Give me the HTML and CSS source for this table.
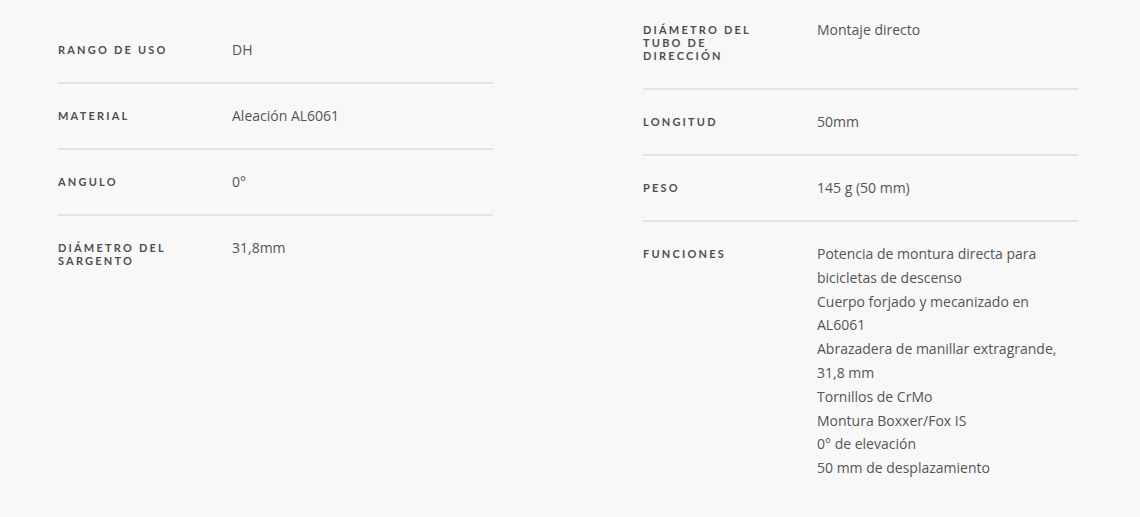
FILE: index.html
```html
<!DOCTYPE html>
<html lang="es">
<head>
<meta charset="utf-8">
<title>Especificaciones</title>
<link rel="stylesheet" href="styles.css">
</head>
<body>
<div class="specs">
  <div class="spec-table spec-left">
    <div class="row">
      <div class="label">Rango de uso</div>
      <div class="value">DH</div>
    </div>
    <div class="row">
      <div class="label">Material</div>
      <div class="value">Aleación AL6061</div>
    </div>
    <div class="row">
      <div class="label">Angulo</div>
      <div class="value">0°</div>
    </div>
    <div class="row last">
      <div class="label">Diámetro del sargento</div>
      <div class="value">31,8mm</div>
    </div>
  </div>
  <div class="spec-table spec-right">
    <div class="row">
      <div class="label">Diámetro del tubo de dirección</div>
      <div class="value">Montaje directo</div>
    </div>
    <div class="row">
      <div class="label">Longitud</div>
      <div class="value">50mm</div>
    </div>
    <div class="row">
      <div class="label">Peso</div>
      <div class="value">145 g (50 mm)</div>
    </div>
    <div class="row last">
      <div class="label">Funciones</div>
      <div class="value">Potencia de montura directa para bicicletas de descenso<br>Cuerpo forjado y mecanizado en AL6061<br>Abrazadera de manillar extragrande, 31,8 mm<br>Tornillos de CrMo<br>Montura Boxxer/Fox IS<br>0° de elevación<br>50 mm de desplazamiento</div>
    </div>
  </div>
</div>
</body>
</html>
```
FILE: styles.css
```css
html, body {
  margin: 0;
  padding: 0;
  background: #f8f8f8;
}
body {
  font-family: "Open Sans", "Liberation Sans", sans-serif;
  color: #555;
  height: 517px;
  overflow: hidden;
}
.specs {
  display: grid;
  grid-template-columns: 435px 435px;
  column-gap: 150px;
  padding-left: 58px;
  align-items: start;
}
.spec-left {
  margin-top: 18px;
}
.spec-right {
  margin-top: -2px;
}
.row {
  display: grid;
  grid-template-columns: 174px 1fr;
  padding: 20px 0;
  border-bottom: 2px solid #e4e4e4;
}
.row.last {
  border-bottom: none;
}
.label {
  font-family: "Lato", "Open Sans", sans-serif;
  font-weight: 700;
  font-size: 11px;
  line-height: 13px;
  letter-spacing: 2.2px;
  text-transform: uppercase;
  color: #4f4f4f;
  padding: 5px 44px 6px 0;
}
.value {
  font-size: 14px;
  line-height: 23.8px;
  color: #555;
}
```
